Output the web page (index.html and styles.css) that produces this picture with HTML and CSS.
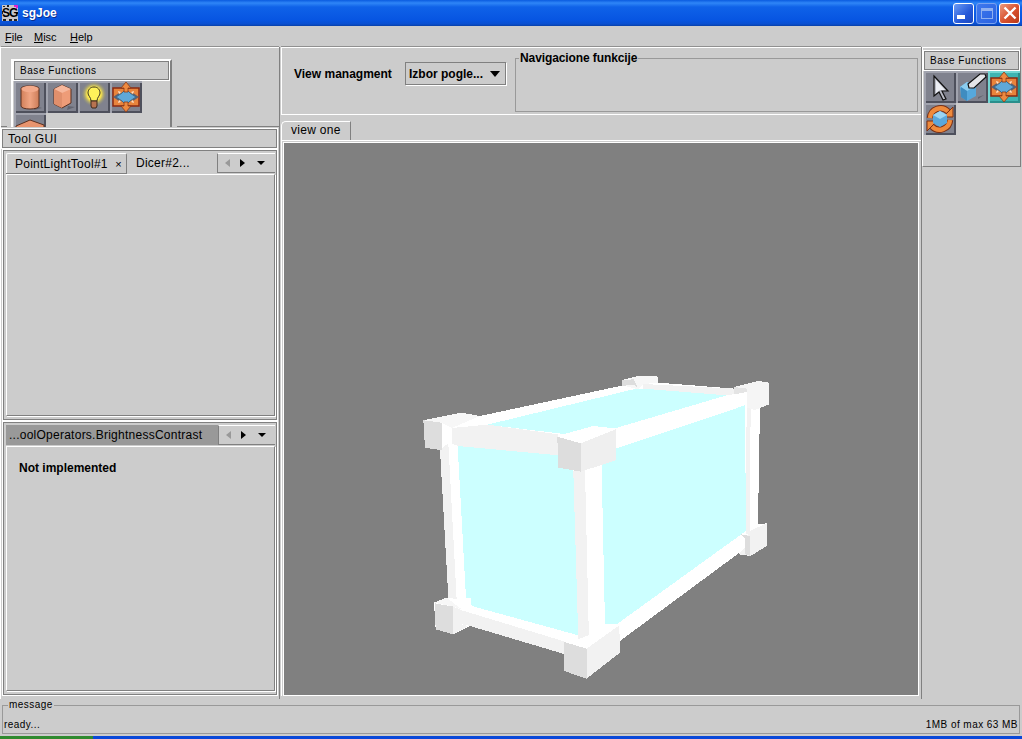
FILE: index.html
```html
<!DOCTYPE html>
<html lang="en">
<head>
    <meta charset="UTF-8">
    <title>sgJoe</title>
    <link rel="stylesheet" href="styles.css">
</head>
<body>
    <svg class="icon-defs" width="0" height="0">
        <defs>
            <linearGradient id="copper" x1="0" x2="1" y1="0" y2="0">
                <stop offset="0" stop-color="#d2805a"/><stop offset=".5" stop-color="#f0a583"/><stop offset="1" stop-color="#cc7c58"/>
            </linearGradient>
            <radialGradient id="glow">
                <stop offset="0" stop-color="#fff4a0"/><stop offset=".55" stop-color="#f8e44a"/><stop offset="1" stop-color="#85877f" stop-opacity="0"/>
            </radialGradient>
            <symbol id="i-cyl" viewBox="0 0 32 32">
                <path d="M22 25l6 2-8 2z" fill="#62646f"/>
                <path d="M7 7.5C7 4 25 4 25 7.5V25c0 4-18 4-18 0z" fill="url(#copper)" stroke="#5a3020"/>
                <ellipse cx="16" cy="8" rx="8.5" ry="3.2" fill="#f2a98a"/>
            </symbol>
            <symbol id="i-cube" viewBox="0 0 32 32">
                <path d="M22 25l7 1-8 3z" fill="#62646f"/>
                <path d="M16 4l9 4v14l-9 5-8-4V8z" fill="#ee9c78" stroke="#5a3020"/>
                <path d="M8 8l8 4 9-4-9-4z" fill="#f6b79c"/>
                <path d="M16 12v15l-8-4V8z" fill="#e08f6c"/>
            </symbol>
            <symbol id="i-prism" viewBox="0 0 32 32">
                <path d="M2 13L16 7l14 5v20H2z" fill="#e8946e" stroke="#5a3020"/>
            </symbol>
            <symbol id="i-bulb" viewBox="0 0 32 32">
                <circle cx="16" cy="13" r="13" fill="url(#glow)"/>
                <path d="M16 6c-4 0-6 3-6 6 0 3 3 4 3 8h6c0-4 3-5 3-8 0-3-2-6-6-6z" fill="#fff25a" stroke="#3a3520"/>
                <path d="M13 20h6v5l-1 2h-4l-1-2z" fill="#b87350" stroke="#3f2a1c"/>
            </symbol>
            <symbol id="i-move" viewBox="0 0 32 32">
                <path d="M3 7h26v18H3z" fill="#e8843c" stroke="#8a2a12" stroke-width="1.5"/>
                <path d="M3 16l6-4v8zM29 16l-6-4v8z" fill="#5d6070"/>
                <path d="M16 8l4 4 6 4-6 4-4 4-4-4-6-4 6-4z" fill="#5fa8d8" stroke="#3d6a8c"/>
                <path d="M8 10l3 1-2 2zM24 10l-3 1 2 2zM8 22l3-1-2-2zM24 22l-3-1 2-2z" fill="#fbe0c8"/>
                <path d="M16 1l5 6h-3v4h-4V7h-3zM16 31l5-6h-3v-4h-4v4h-3z" fill="#ee8a40" stroke="#8a3a18" stroke-width=".8"/>
            </symbol>
            <symbol id="i-arrow" viewBox="0 0 32 32">
                <path d="M10 5l14 15h-6l4 8-3 1-4-8-5 4z" fill="#b9bbc6" stroke="#111" stroke-width="1.2"/>
                <path d="M12 9l9 10h-5l-4 3z" fill="#eceef4"/>
            </symbol>
            <symbol id="i-eraser" viewBox="0 0 32 32">
                <path d="M4 16l7-5 9 4v10l-9 5-6-4z" fill="#56a8dc"/>
                <path d="M4 16l7 4 9-5-9-4z" fill="#8ccdf0"/>
                <path d="M11 20v10l-6-4V16z" fill="#3f8cc0"/>
                <path d="M12 13L24 3h5l1 3-12 11h-5z" fill="#e4e5e8" stroke="#111" stroke-width="1.2"/>
                <path d="M22 26l6-2-6 4z" fill="#62646f"/>
            </symbol>
            <symbol id="i-rotate" viewBox="0 0 32 32">
                <path d="M6 15A10.5 10.5 0 0 1 24 8.5M26 17A10.5 10.5 0 0 1 8 23.5" fill="none" stroke="#7a3014" stroke-width="6.5"/>
                <path d="M6 15A10.5 10.5 0 0 1 24 8.5M26 17A10.5 10.5 0 0 1 8 23.5" fill="none" stroke="#ee8a3c" stroke-width="4.4"/>
                <path d="M29 4v10H19zM3 28V18h10z" fill="#ee8a3c" stroke="#7a3014"/>
                <path d="M16 8l7 4v8l-7 4-7-4v-8z" fill="#5aa8dc"/>
                <path d="M9 12l7 4 7-4-7-4z" fill="#9ad4f2"/>
            </symbol>
        </defs>
    </svg>

    <div class="titlebar">
        <svg class="app-icon" width="16" height="16" viewBox="0 0 16 16">
            <rect width="16" height="16" fill="#c9c6c9"/>
            <path d="M1 1h2v1H1zM5 0h2v2H5zM0 6h1v3H0zM1 14h3v2H1zM7 14h3v2H7zM12 14h3v2h-3zM14 7h2v2h-2z" fill="#222"/>
            <path d="M12 0h4v3h-1v2h-1V2h-2z" fill="#e020d0"/>
            <text x="0" y="12" class="app-icon-text">SG</text>
        </svg>
        <span class="app-title">sgJoe</span>
        <div class="window-buttons">
            <div class="win-btn win-min"><span class="min-bar"></span></div>
            <div class="win-btn win-max"><span class="max-box"></span></div>
            <div class="win-btn win-close">
                <svg width="14" height="14" viewBox="0 0 14 14"><path d="M1.5 1.5l11 11M12.5 1.5l-11 11" stroke="#fff" stroke-width="2.4"/></svg>
            </div>
        </div>
    </div>

    <div class="menubar">
        <span class="menu-item"><u>F</u>ile</span>
        <span class="menu-item"><u>M</u>isc</span>
        <span class="menu-item"><u>H</u>elp</span>
    </div>

    <div class="main">
        <div class="left-col">
            <div class="left-top">
                <div class="toolbar toolbar-left">
                    <div class="toolbar-title">Base Functions</div>
                    <div class="tool-grid">
                        <div class="tool-btn"><svg width="32" height="32"><use href="#i-cyl"/></svg></div>
                        <div class="tool-btn"><svg width="32" height="32"><use href="#i-cube"/></svg></div>
                        <div class="tool-btn"><svg width="32" height="32"><use href="#i-bulb"/></svg></div>
                        <div class="tool-btn"><svg width="32" height="32"><use href="#i-move"/></svg></div>
                        <div class="tool-btn"><svg width="32" height="32"><use href="#i-prism"/></svg></div>
                    </div>
                </div>
            </div>
            <div class="gui-title">Tool GUI</div>
            <div class="tab-panel panel-upper">
                <div class="tab-strip">
                    <div class="tab tab-on">PointLightTool#1<span class="tab-x">×</span></div>
                    <div class="tab tab-plain">Dicer#2...</div>
                    <div class="tab-nav">
                        <span class="nav-arrow nav-left nav-off"></span>
                        <span class="nav-arrow nav-right"></span>
                        <span class="nav-arrow nav-down"></span>
                    </div>
                </div>
                <div class="tab-body"></div>
            </div>
            <div class="tab-panel panel-lower">
                <div class="tab-strip">
                    <div class="tab tab-dark">...oolOperators.BrightnessContrast</div>
                    <div class="tab-nav">
                        <span class="nav-arrow nav-left nav-off"></span>
                        <span class="nav-arrow nav-right"></span>
                        <span class="nav-arrow nav-down"></span>
                    </div>
                </div>
                <div class="tab-body">
                    <p class="not-impl">Not implemented</p>
                </div>
            </div>
        </div>

        <div class="center-col">
            <div class="view-top">
                <span class="view-label">View managment</span>
                <div class="combo">
                    <span>Izbor pogle...</span>
                    <span class="combo-arrow"></span>
                </div>
                <fieldset class="nav-fields">
                    <legend>Navigacione funkcije</legend>
                </fieldset>
            </div>
            <div class="view-tabs">
                <div class="view-tab">view one</div>
            </div>
            <div class="view-frame">
                <svg class="scene" viewBox="284 142 634 552" preserveAspectRatio="none">
                    <g transform="translate(410 365) scale(0.3333)" shape-rendering="crispEdges">
                        <!-- outline of the whole frame -->
                        <path fill="#ffffff" d="M40 163L155 140L210 150L640 58L636 42L685 30L742 30L745 50L975 68L1045 45L1077 50L1077 115L1050 125L1044 475L1070 472L1070 540L1022 570L985 565L1005 548L630 825L630 860L530 938L462 915L462 864L180 780L130 805L77 790L72 710L115 695L90 250L45 245z"/>
                        <!-- glass faces -->
                        <path fill="#ccffff" d="M143 240L445 268L490 315L505 808L185 720L182 697L168 695z"/>
                        <path fill="#ccffff" d="M575 300L618 248L1005 118L1008 495L620 775L585 775z"/>
                        <path fill="#ccffff" d="M232 176L670 70L700 68L950 88L615 187L550 180L470 205z"/>
                        <!-- back bars -->
                        <path fill="#f2f2f2" d="M700 54L975 68L975 84L950 88L700 68z"/>
                        <!-- right pillar -->
                        <path fill="#f2f2f2" d="M1010 120L1022 120L1020 500L1008 505z"/>
                        <!-- bottom bars -->
                        <path fill="#f2f2f2" d="M155 733L462 826L462 864L180 780L155 775z"/>
                        <!-- top bars -->
                        <path fill="#f2f2f2" d="M125 186L232 176L445 205L445 268L143 240L125 232z"/>
                        <!-- left pillar -->
                        <path fill="#f2f2f2" d="M90 250L115 232L140 700L115 695z"/>
                        <!-- middle pillar -->
                        <path fill="#f2f2f2" d="M490 315L525 310L537 825L505 820z"/>
                        <!-- top left corner -->
                        <path fill="#f7f7f7" d="M40 163L155 140L210 150L125 186L95 170z"/>
                        <path fill="#dddddd" d="M40 163L95 170L97 253L45 245z"/>
                        <!-- back corner -->
                        <path fill="#f7f7f7" d="M636 42L685 30L742 30L745 50L700 54L685 70L636 58z"/>
                        <path fill="#dddddd" d="M636 42L672 40L685 70L672 56L636 60z"/>
                        <!-- top right corner -->
                        <path fill="#f5f5f5" d="M972 63L1045 45L1077 50L1077 115L1035 132L1012 125L1012 78z"/>
                        <path fill="#e4e4e4" d="M972 63L1012 68L1012 78L972 85z"/>
                        <!-- front top corner -->
                        <path fill="#ffffff" d="M442 210L550 180L618 188L512 232z"/>
                        <path fill="#dddddd" d="M442 212L512 232L512 317L445 305z"/>
                        <path fill="#efefef" d="M512 232L618 190L618 283L512 317z"/>
                        <!-- bottom left corner -->
                        <path fill="#f7f7f7" d="M72 710L110 695L155 730L130 722z"/>
                        <path fill="#dddddd" d="M74 712L130 722L130 805L77 790z"/>
                        <path fill="#f2f2f2" d="M130 722L155 733L155 775L175 780L130 805z"/>
                        <!-- bottom right corner -->
                        <path fill="#f2f2f2" d="M1020 495L1070 472L1070 540L1022 570L985 565L1005 545L1005 518z"/>
                        <path fill="#dddddd" d="M993 505L1020 510L1020 570L1005 565L1005 518z"/>
                        <!-- front bottom corner -->
                        <path fill="#ffffff" d="M462 828L505 820L620 775L628 778L530 848z"/>
                        <path fill="#dddddd" d="M462 828L530 848L530 938L462 915z"/>
                        <path fill="#f2f2f2" d="M530 848L628 778L630 860L530 938z"/>
                    </g>
                </svg>
            </div>
        </div>

        <div class="right-col">
            <div class="toolbar-right">
                <div class="toolbar-title">Base Functions</div>
                <div class="tool-grid">
                    <div class="tool-btn"><svg width="32" height="32"><use href="#i-arrow"/></svg></div>
                    <div class="tool-btn"><svg width="32" height="32"><use href="#i-eraser"/></svg></div>
                    <div class="tool-btn tool-active"><svg width="32" height="32"><use href="#i-move"/></svg></div>
                    <div class="tool-btn"><svg width="32" height="32"><use href="#i-rotate"/></svg></div>
                </div>
            </div>
        </div>
    </div>

    <fieldset class="status">
        <legend>message</legend>
        <div class="status-row">
            <span>ready...</span>
            <span>1MB of max 63 MB</span>
        </div>
    </fieldset>

    <div class="taskstrip"><div class="start-strip"></div></div>
</body>
</html>
```

FILE: styles.css
```css
* {
    box-sizing: border-box;
}
html, body {
    margin: 0;
    padding: 0;
}
body {
    width: 1022px;
    height: 739px;
    display: flex;
    flex-direction: column;
    overflow: hidden;
    background-color: #cccccc;
    color: #000;
    font-family: "Liberation Sans", Arial, sans-serif;
    font-size: 12px;
}
.icon-defs {
    position: absolute;
}

/* window chrome */
.titlebar {
    height: 26px;
    flex: none;
    display: flex;
    align-items: center;
    padding-left: 2px;
    background: linear-gradient(to bottom, #0a5be0 0, #2f86f7 3px, #0f62e8 7px, #0755e2 20px, #0a4fd0 24px, #0840a8 26px);
}
.app-icon {
    flex: none;
}
.app-icon-text {
    font-family: "Liberation Sans", Arial, sans-serif;
    font-size: 12px;
    font-weight: bold;
    letter-spacing: -1px;
    fill: #000;
}
.app-title {
    margin-left: 4px;
    color: #fff;
    font-family: "Liberation Sans", Arial, sans-serif;
    font-size: 12px;
    font-weight: bold;
    text-shadow: 1px 1px 0 #0a2f90;
}
.window-buttons {
    margin-left: auto;
    margin-right: 2px;
    display: flex;
    gap: 2px;
}
.win-btn {
    width: 21px;
    height: 21px;
    border: 1px solid #fff;
    border-radius: 3px;
    display: flex;
    align-items: center;
    justify-content: center;
    background: linear-gradient(135deg, #6c9cf5, #2458d8 60%, #1c48c0);
}
.win-max {
    border-color: #7aa2f0;
    background: linear-gradient(135deg, #3e78ee, #2a62e0);
}
.win-close {
    background: linear-gradient(135deg, #eb9a80, #d8502c 55%, #b83818);
}
.min-bar {
    width: 8px;
    height: 4px;
    background-color: #fff;
    margin: 8px 5px 0 0;
}
.max-box {
    width: 12px;
    height: 11px;
    border: 1px solid #8fb0f0;
    border-top-width: 3px;
}
.menubar {
    height: 21px;
    flex: none;
    display: flex;
    align-items: center;
    padding-left: 5px;
    font-size: 11px;
}
.menu-item {
    width: 36px;
    padding-top: 1px;
}
.menu-item:first-child {
    width: 29px;
}

/* main layout */
.main {
    flex: 1;
    min-height: 0;
    display: grid;
    grid-template-columns: 280px 642px 100px;
}
.left-col {
    display: flex;
    flex-direction: column;
    border-right: 1px solid #808080;
    border-left: 1px solid #fff;
    padding-bottom: 4px;
}
.left-top {
    height: 80px;
    flex: none;
    border-top: 1px solid #fff;
    box-shadow: 0 -1px 0 #909090;
    padding: 11px 0 0 10px;
    overflow: hidden;
    background: linear-gradient(to right, #808080 6px, transparent 6px, transparent 176px, #808080 176px) bottom / 100% 1px no-repeat;
}
.toolbar-left {
    width: 161px;
    height: 80px;
    padding: 0 1px 1px;
    border: 2px solid #fff;
    border-right-color: #808080;
    border-bottom: none;
    background-color: #cccccc;
}
.toolbar-title {
    height: 19px;
    border: 1px solid #808080;
    outline: 1px solid #fff;
    display: flex;
    align-items: center;
    padding-left: 5px;
    font-size: 10px;
    letter-spacing: 0.55px;
}
.tool-grid {
    display: flex;
    flex-wrap: wrap;
    margin-top: 1px;
}
.tool-btn {
    width: 32px;
    height: 32px;
    background-color: #80828e;
    box-shadow: inset 2px 2px 0 #a1a3ae, inset -2px -2px 0 #4e505c;
}
.tool-btn svg {
    display: block;
}
.tool-active {
    background-color: #3fb5b2;
    box-shadow: inset 2px 2px 0 #74d6d2, inset -2px -2px 0 #2a8f8c;
}
.gui-title {
    height: 19px;
    flex: none;
    margin: 2px 2px 0 1px;
    border: 1px solid #808080;
    outline: 1px solid #fff;
    padding-left: 5px;
    display: flex;
    align-items: center;
    letter-spacing: 0.3px;
}
.tab-panel {
    display: flex;
    flex-direction: column;
    margin: 2px 2px 0 2px;
    border: 1px solid #808080;
    outline: 1px solid #fff;
    padding: 2px 1px 3px 2px;
}
.panel-upper {
    height: 270px;
    flex: none;
}
.panel-lower {
    flex: 1;
    min-height: 0;
}
.tab-strip {
    height: 20px;
    flex: none;
    display: flex;
    letter-spacing: 0.25px;
}
.tab {
    display: flex;
    align-items: center;
    padding-left: 8px;
}
.tab-on {
    width: 121px;
    border-top: 1px solid #fff;
    border-left: 1px solid #fff;
    border-right: 1px solid #808080;
    border-radius: 2px 2px 0 0;
    box-shadow: 0 1px 0 #808080;
}
.tab-x {
    margin-left: auto;
    margin-right: 4px;
    font-size: 11px;
}
.tab-plain {
    width: 90px;
    padding-left: 9px;
}
.tab-dark {
    width: 212px;
    background-color: #999999;
    padding-left: 3px;
}
.tab-nav {
    flex: 1;
    display: flex;
    align-items: center;
    border-left: 1px solid #808080;
    border-top: 1px solid #fff;
    border-bottom: 1px solid #808080;
    padding-left: 7px;
}
.nav-arrow {
    width: 0;
    height: 0;
    border-style: solid;
    border-color: transparent;
}
.nav-left {
    border-width: 4px 5px 4px 0;
    border-right-color: #000;
    margin-right: 10px;
}
.nav-off {
    border-right-color: #999999;
}
.nav-right {
    border-width: 4px 0 4px 5px;
    border-left-color: #000;
    margin-right: 12px;
}
.nav-down {
    border-width: 4px 4px 0 4px;
    border-top-color: #000;
}
.tab-body {
    flex: 1;
    min-height: 0;
    margin-top: 1px;
    border-top: 1px solid #fff;
    border-left: 1px solid #fff;
    border-right: 1px solid #808080;
    border-bottom: 1px solid #808080;
    box-shadow: 1px 1px 0 #fff;
}
.not-impl {
    margin: 14px 0 0 12px;
    font-weight: bold;
}

/* center */
.center-col {
    display: flex;
    flex-direction: column;
    padding-bottom: 3px;
    padding-left: 1px;
    border-right: 1px solid #808080;
}
.view-top {
    height: 68px;
    flex: none;
    display: flex;
    align-items: flex-start;
    border-top: 1px solid #fff;
    border-left: 1px solid #fff;
    border-bottom: 1px solid #fff;
    box-shadow: 0 -1px 0 #909090;
    padding-left: 12px;
}
.view-label {
    margin-top: 19px;
    width: 111px;
    font-weight: bold;
}
.combo {
    width: 101px;
    height: 23px;
    margin-top: 14px;
    border: 1px solid #808080;
    box-shadow: 1px 1px 0 #fff;
    display: flex;
    align-items: center;
    justify-content: space-between;
    padding: 0 5px 0 3px;
    font-weight: bold;
}
.combo-arrow {
    width: 0;
    height: 0;
    border-style: solid;
    border-width: 6px 5px 0 5px;
    border-color: #000 transparent transparent;
}
.nav-fields {
    width: 403px;
    height: 60px;
    margin: 4px 0 0 9px;
    padding: 0;
    border: 1px solid #999999;
    font-weight: bold;
    letter-spacing: -0.1px;
}
.nav-fields legend {
    margin-left: 3px;
    padding: 0 1px;
    line-height: 13px;
}
.view-tabs {
    height: 25px;
    flex: none;
    display: flex;
    align-items: flex-end;
}
.view-tab {
    width: 70px;
    height: 19px;
    border: 1px solid #fff;
    border-right-color: #808080;
    border-bottom: none;
    border-radius: 5px 0 0 0;
    padding: 0 0 2px 9px;
    display: flex;
    align-items: center;
    letter-spacing: 0.3px;
}
.view-frame {
    flex: 1;
    min-height: 0;
    border-top: 1px solid #fff;
    border-left: 1px solid #fff;
    padding: 2px 2px 1px 2px;
}
.scene {
    display: block;
    width: 634px;
    height: 552px;
    background-color: #808080;
    outline: 1px solid #fff;
}

/* right toolbar */
.toolbar-right {
    height: 120px;
    margin-right: 1px;
    border-top: 1px solid #fff;
    border-left: 1px solid #fff;
    border-right: 1px solid #808080;
    border-bottom: 1px solid #808080;
    padding: 3px 0 0 1px;
}
.toolbar-right .toolbar-title {
    margin-right: 1px;
}

/* status */
.status {
    height: 35px;
    flex: none;
    margin: 1px 2px 2px;
    padding: 0 1px 0 1px;
    border: 1px solid #999999;
    font-size: 10px;
    letter-spacing: 0.45px;
    min-width: 0;
}
.status legend {
    margin-left: 4px;
    padding: 0 1px;
    line-height: 12px;
}
.status-row {
    display: flex;
    justify-content: space-between;
    margin-top: 8px;
}
.taskstrip {
    height: 3px;
    flex: none;
    background-color: #0a48d8;
}
.start-strip {
    width: 93px;
    height: 3px;
    background-color: #2f8a2f;
}
```
